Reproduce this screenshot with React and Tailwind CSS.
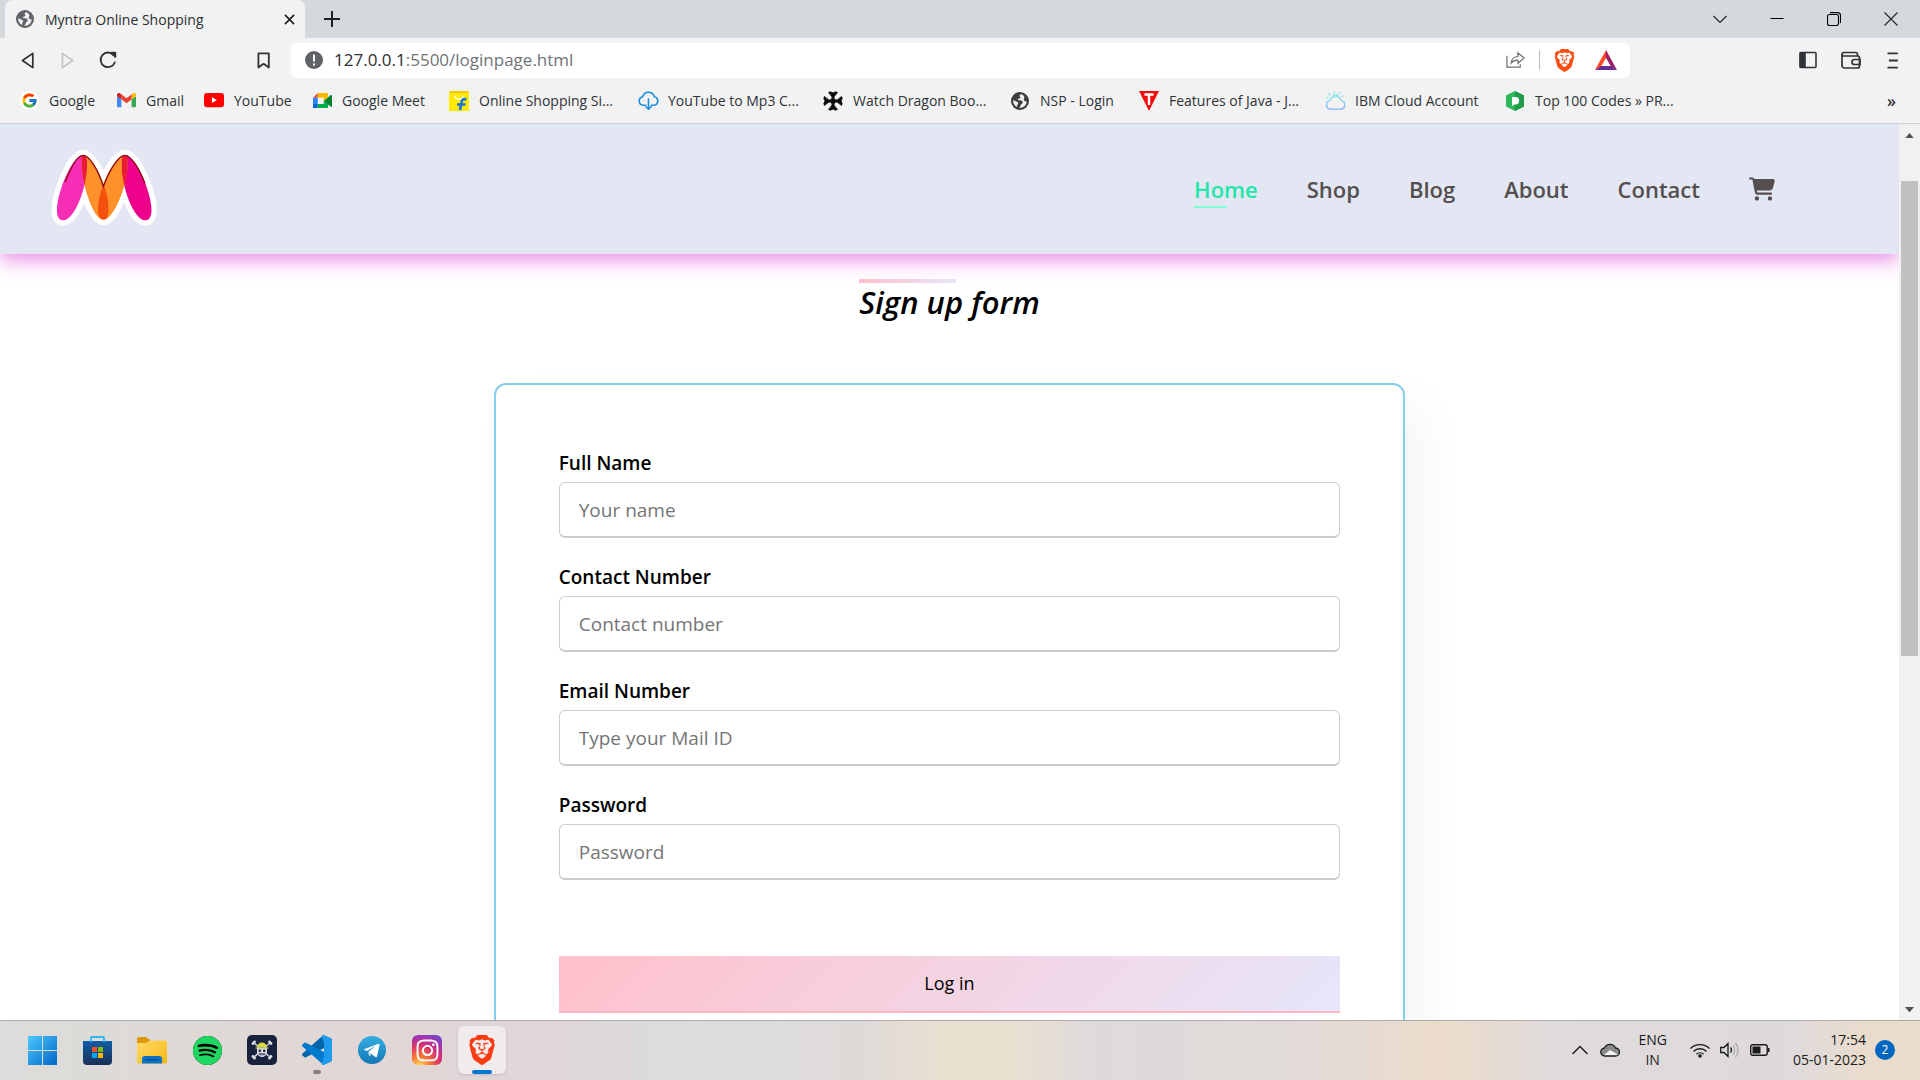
import React from "react";
import { FcGoogle } from "react-icons/fc";
import { FaCartShopping, FaInstagram } from "react-icons/fa6";
import { SiBrave, SiSpotify } from "react-icons/si";

function Globe({ color }) {
  return (
    <svg viewBox="0 0 18 18" className="w-[18px] shrink-0">
      <circle cx="9" cy="9" r="9" fill={color} />
      <path d="M10 2.200c-1.600.6-1.800 1.800-.8 2.600 1 .8-.4 1.700-1.700 2-1.300.3-.8 1.500.6 1.500 2.200 0 3.600.4 3.600 2 0 1.500-1.500 1.600-1.900 2.800-.3 1-.6 1.900-1.600 2.600 4 .3 7.300-2.500 7.500-6.300-1.600.2-2.600-.3-3-1.300-.4-1.200 1-1.900.6-3.200C12.900 3.700 11.500 2.400 10 2.200z" fill="#f2f2f2" />
      <path d="M2.200 8.200c1.600.4 2.600 1.200 3.700 1.500 1.400.4 1.600 1.600.8 2.500-.7.800-.2 1.700-.6 2.800C3.500 13.800 1.900 11 2.200 8.200z" fill="#f2f2f2" />
    </svg>
  );
}

function MyntraLogo() {
  const l1 = "M250 103 C215 105 171 220 171 268 C171 290 178 300 190 300 C225 298 262 200 262 130 C262 112 257 103 250 103Z";
  const l2 = "M250 104 C280 104 327 205 327 265 C327 285 322 298 311 298 C280 298 246 190 246 130 C246 114 246 104 250 104Z";
  const r2 = "M376 104 C344 104 295 205 295 265 C295 285 300 298 311 298 C344 298 384 190 384 130 C384 114 382 104 376 104Z";
  const r1 = "M376 103 C411 105 456 220 456 268 C456 290 449 300 437 300 C402 298 366 200 366 130 C366 112 369 103 376 103Z";
  return (
    <svg viewBox="154 85 318 232" className="h-[77px] w-[106px]" aria-label="Myntra">
      <defs>
        <clipPath id="cl"><path d={l1} /></clipPath>
        <clipPath id="cm"><path d={l2} /></clipPath>
        <clipPath id="cr"><path d={r1} /></clipPath>
      </defs>
      <g fill="#fff" stroke="#fff" strokeWidth="32" strokeLinejoin="round">
        <path d={l1} /><path d={l2} /><path d={r2} /><path d={r1} />
      </g>
      <path d={l1} fill="#f52eb5" />
      <path d={r1} fill="#ec008c" />
      <path d={l2} fill="#ff912b" />
      <path d={r2} fill="#ff912b" />
      <path d={l2} fill="#e91c38" clipPath="url(#cl)" />
      <path d={r2} fill="#e91c38" clipPath="url(#cr)" />
      <path d={r2} fill="#f4510f" clipPath="url(#cm)" />
      <path d="M196 185 C215 135 235 104 250 104 C268 104 295 145 311 198 C330 145 358 104 376 104 C394 104 420 145 436 188" fill="none" stroke="#8c0a10" strokeWidth="4" />
    </svg>
  );
}

function Gmail() {
  return (
    <svg viewBox="0 0 24 18" className="w-[19px]">
      <path d="M0 2v14.4A1.6 1.6 0 0 0 1.600 18H5.500V8L0 4z" fill="#4285f4" />
      <path d="M24 2v14.400A1.600 1.600 0 0 1 22.400 18H18.500V8L24 4z" fill="#34a853" />
      <path d="M18.500 2v6L24 4V2.400C24 .4 21.700-.7 20 .6z" fill="#fbbc04" />
      <path d="M5.500 8V1.700L12 6.600l6.500-4.900V8L12 13z" fill="#ea4335" />
      <path d="M0 2.400V4l5.500 4V1.700L4 .6C2.300-.7 0 .4 0 2.400z" fill="#c5221f" />
    </svg>
  );
}

function YouTube() {
  return (
    <svg viewBox="0 0 24 17" className="w-5">
      <rect width="24" height="17" rx="3.500" fill="#f00" />
      <path d="M9.500 5v7l6-3.500z" fill="#fff" />
    </svg>
  );
}

function Meet() {
  return (
    <svg viewBox="0 0 24 20" className="w-[19px]">
      <path d="M6 0L0 6h6z" fill="#ea4335" />
      <path d="M0 6h6v8H0z" fill="#2684fc" />
      <path d="M0 14v4.500A1.500 1.500 0 0 0 1.500 20H6v-6z" fill="#0066da" />
      <path d="M6 0v6h7.500v4L19 5.500v-4A1.500 1.500 0 0 0 17.500 0z" fill="#ffba00" />
      <path d="M13.500 10v4H6v6h11.500a1.500 1.500 0 0 0 1.500-1.500v-4z" fill="#00ac47" />
      <path d="M13.500 10L22.500 2.600c.6-.5 1.500-.1 1.500.7v13.400c0 .8-.9 1.200-1.500.7z" fill="#00832d" />
    </svg>
  );
}

function Flipkart() {
  return (
    <svg viewBox="0 0 20 20" className="w-5">
      <path d="M1 0h18l1 3v17H0V3z" fill="#ffea00" />
      <path d="M1 0h18l.7 2H.3z" fill="#f7c600" />
      <path d="M6 4.500c0 5 8 5 8 0" fill="none" stroke="#fff" strokeWidth="1.300" />
      <path d="M17.500 8.500c-3.500-1-4.500 0-5 3L11 19M8 13.500h8.500" fill="none" stroke="#1672d8" strokeWidth="2.600" />
    </svg>
  );
}

function CloudDownload() {
  return (
    <svg viewBox="0 0 22 20" className="w-[21px]" fill="none" stroke="#1a8fe0" strokeWidth="1.700" strokeLinecap="round" strokeLinejoin="round">
      <path d="M8 15H5.500a4.500 4.500 0 0 1-.6-8.900 6.300 6.300 0 0 1 12.200 0A4.500 4.500 0 0 1 16.500 15H14" />
      <path d="M11 8.500V19M8.300 16.500L11 19l2.700-2.500" />
    </svg>
  );
}

function Cross() {
  const arm = "M10 10.500Q9.500 5 5.500 1.500L7.500 .8 10 2l2.500-1.200 2 .7Q10.500 5 10 10.500z";
  return (
    <svg viewBox="0 0 20 20" className="w-5" fill="#0a0a0a" stroke="#0a0a0a" strokeWidth=".8">
      <path d={arm} />
      <path d={arm} transform="rotate(90 10 10)" />
      <path d={arm} transform="rotate(180 10 10)" />
      <path d={arm} transform="rotate(270 10 10)" />
      <circle cx="10" cy="10" r="2.600" />
    </svg>
  );
}

function Techno() {
  return (
    <svg viewBox="0 0 20 20" className="w-5">
      <path d="M0 0h20l-10 20z" fill="#f20d0d" />
      <path d="M5.500 3.500h9M10 3.500V14" stroke="#fff" strokeWidth="2.400" />
    </svg>
  );
}

function IbmCloud() {
  return (
    <svg viewBox="0 0 22 20" className="w-[21px]" fill="none" strokeWidth="1.500" strokeLinecap="round">
      <defs>
        <linearGradient id="ibm" x1="0" y1="0" x2="0" y2="1">
          <stop offset="0" stopColor="#8fe6ec" />
          <stop offset="1" stopColor="#7fb0fb" />
        </linearGradient>
      </defs>
      <path d="M6 19a4.500 4.500 0 0 1-.8-8.900 6.200 6.200 0 0 1 11.800 0A4.500 4.500 0 0 1 16.500 19z" stroke="url(#ibm)" />
      <path d="M8 5.500a4.500 4.500 0 0 1 6-.3M4 3l1 1M9.500 1v1.200M15.500 1.500l-.8 1M2 7h1.200M18.500 5l-1 .6" stroke="#8fe6ec" />
    </svg>
  );
}

function PrepInsta() {
  return (
    <svg viewBox="0 0 18 20" className="w-[18px]">
      <path d="M9 0l9 4.500v11L9 20l-9-4.500v-11z" fill="#2eb85c" />
      <path d="M9 0l9 4.500v11L9 20z" fill="#219a49" />
      <path d="M6 6h3.500a3.500 3.500 0 0 1 0 7.400H8.200L6 15z" fill="#fff" />
    </svg>
  );
}

const bookmarks = [
  { label: "Google", icon: <span className="rounded-full bg-white p-px"><FcGoogle size={17} /></span>, w: "w-[97px]" },
  { label: "Gmail", icon: <Gmail />, w: "w-[88px]" },
  { label: "YouTube", icon: <YouTube />, w: "w-[108px]" },
  { label: "Google Meet", icon: <Meet />, w: "w-[137px]" },
  { label: "Online Shopping Si...", icon: <Flipkart />, w: "w-[189px]" },
  { label: "YouTube to Mp3 C...", icon: <CloudDownload />, w: "w-[185px]" },
  { label: "Watch Dragon Boo...", icon: <Cross />, w: "w-[187px]" },
  { label: "NSP - Login", icon: <Globe color="#3c4043" />, w: "w-[129px]" },
  { label: "Features of Java - J...", icon: <Techno />, w: "w-[186px]" },
  { label: "IBM Cloud Account", icon: <IbmCloud />, w: "w-[180px]" },
  { label: "Top 100 Codes » PR...", icon: <PrepInsta />, w: "w-[180px]" },
];

function IconButton({ label, className = "", children }) {
  return (
    <button type="button" aria-label={label} className={"flex shrink-0 items-center justify-center " + className}>
      {children}
    </button>
  );
}

function TabStrip() {
  return (
    <div className="flex h-[38px] items-stretch bg-[#d5d9dc] pl-[5px]">
      <div className="flex w-[300px] items-center rounded-t-lg bg-[#f2f2f2] pr-[6px] pl-[11px]">
        <Globe color="#5f6368" />
        <span className="ml-[11px] flex-1 text-[14px] text-[#2b2d30]">Myntra Online Shopping</span>
        <IconButton label="Close tab" className="size-5">
          <svg viewBox="0 0 12 12" className="w-[11px]" stroke="#202124" strokeWidth="1.800"><path d="M1 1l10 10M11 1L1 11" /></svg>
        </IconButton>
      </div>
      <IconButton label="New tab" className="ml-[15px] w-6">
        <svg viewBox="0 0 16 16" className="w-4" stroke="#202124" strokeWidth="2"><path d="M8 0v16M0 8h16" /></svg>
      </IconButton>
      <div className="ml-auto flex pr-px text-black">
        <IconButton label="Search tabs" className="w-[57px]">
          <svg viewBox="0 0 14 14" className="w-[14px]" fill="none" stroke="#222" strokeWidth="1.100"><path d="M.5 4l6.500 6.500L13.500 4" /></svg>
        </IconButton>
        <IconButton label="Minimize" className="w-[57px]">
          <svg viewBox="0 0 14 14" className="w-[14px]" stroke="#000" strokeWidth="1"><path d="M.5 6.500h13" /></svg>
        </IconButton>
        <IconButton label="Restore" className="w-[57px]">
          <svg viewBox="0 0 14 14" className="w-[14px]" fill="none" stroke="#000" strokeWidth="1.100"><rect x=".5" y="2.500" width="11" height="11" rx="2" /><path d="M3 .6h7.500a3 3 0 0 1 3 3V11" /></svg>
        </IconButton>
        <IconButton label="Close" className="w-[57px]">
          <svg viewBox="0 0 14 14" className="w-[14px]" stroke="#222" strokeWidth="1.100"><path d="M.5 .5l13 13M13.500 .5l-13 13" /></svg>
        </IconButton>
      </div>
    </div>
  );
}

function Toolbar() {
  return (
    <div className="flex h-[44px] items-center bg-[#f2f2f2]">
      <IconButton label="Back" className="ml-2 w-10">
        <svg viewBox="0 0 14 18" className="h-[17px]" fill="none" stroke="#2f3337" strokeWidth="1.800" strokeLinejoin="round"><path d="M12.500 1.500v15L1.500 9z" /></svg>
      </IconButton>
      <IconButton label="Forward" className="w-10">
        <svg viewBox="0 0 14 18" className="h-[17px]" fill="none" stroke="#c4c4c4" strokeWidth="1.800" strokeLinejoin="round"><path d="M1.500 1.500v15l11-7.500z" /></svg>
      </IconButton>
      <IconButton label="Reload" className="w-10">
        <svg viewBox="0 0 18 18" className="w-[18px]" fill="none" stroke="#2f3337" strokeWidth="1.900" strokeLinecap="round"><path d="M15.800 11.500A7.300 7.300 0 1 1 14.500 4" /><path d="M12.300 1.600h4v4.300z" fill="#2f3337" strokeLinejoin="round" /></svg>
      </IconButton>
      <IconButton label="Bookmark this tab" className="ml-[116px] w-10">
        <svg viewBox="0 0 14 18" className="h-[17px]" fill="none" stroke="#2f3337" strokeWidth="1.900" strokeLinejoin="round"><path d="M1.500 1.500h11v15L7 12.500l-5.500 4z" /></svg>
      </IconButton>
      <div className="ml-[7px] flex h-[35px] min-w-0 flex-1 items-center rounded-md bg-white pr-2 pl-[14px]">
        <svg viewBox="0 0 18 18" className="w-[18px] shrink-0"><circle cx="9" cy="9" r="9" fill="#5f6368" /><path d="M9 3.500v7M9 12.500v2" stroke="#fff" strokeWidth="2" /></svg>
        <div className="ml-[11px] flex-1 text-[17px] text-[#6f7377]"><span className="text-[#2b2d30]">127.0.0.1</span>:5500/loginpage.html</div>
        <IconButton label="Share" className="w-8">
          <svg viewBox="0 0 20 18" className="w-[19px]" fill="none" stroke="#6b6f73" strokeWidth="1.300"><path d="M1 5v12h14v-3M5.500 12.500c.5-4.500 3-6.500 7-6.700V2L19 7.500 12.500 13V9.500C9.500 9.400 7.200 10.400 5.500 12.500z" /></svg>
        </IconButton>
        <span className="mx-2 h-5 w-px bg-[#bbb]" />
        <IconButton label="Brave Shields" className="w-8"><SiBrave size={23} color="#fb4c14" /></IconButton>
        <IconButton label="Brave Rewards" className="ml-[10px] w-8">
          <svg viewBox="0 0 22 20" className="w-[22px]">
            <path d="M11 0L0 20l6-3.500L11 8z" fill="#ff4724" />
            <path d="M11 0l11 20-6-3.500L11 8z" fill="#9e1f63" />
            <path d="M0 20h22l-6-4H6z" fill="#662d91" />
          </svg>
        </IconButton>
      </div>
      <div className="ml-[156px] flex pr-[7px]">
        <IconButton label="Sidebar" className="w-[43px]">
          <svg viewBox="0 0 18 18" className="w-[18px]" fill="none" stroke="#2f3337" strokeWidth="1.600"><rect x="1" y="1.500" width="16" height="15" rx="1" /><path d="M1.500 2h4.500v14H1.500z" fill="#2f3337" /></svg>
        </IconButton>
        <IconButton label="Wallet" className="w-[43px]">
          <svg viewBox="0 0 20 18" className="w-5" fill="none" stroke="#2f3337" strokeWidth="1.700"><path d="M1 3.500v11A2.500 2.500 0 0 0 3.500 17h13a2 2 0 0 0 2-2V7a2 2 0 0 0-2-2H2.500A1.500 1.500 0 0 1 1 3.500 2 2 0 0 1 3 1.500h11.500a2 2 0 0 1 2 2V5" /><path d="M19 8.500h-5.500a2.500 2.500 0 0 0 0 5H19z" /></svg>
        </IconButton>
        <IconButton label="Menu" className="w-[41px]">
          <svg viewBox="0 0 12 18" className="h-[17px]" stroke="#2f3337" strokeWidth="1.900"><path d="M.5 1.500h11M2 9h9.500M.5 16.500h11" /></svg>
        </IconButton>
      </div>
    </div>
  );
}

function Bookmarks() {
  return (
    <nav aria-label="Bookmarks" className="flex h-[42px] items-center border-b border-[#d0d2d6] bg-[#f2f2f2] pb-1 pl-[18px]">
      {bookmarks.map((b) => (
        <a key={b.label} href="#bookmark" className={"flex shrink-0 items-center gap-[9px] whitespace-nowrap text-[14px] text-[#2f3237] " + b.w}>
          <span className="flex w-[22px] shrink-0 justify-center">{b.icon}</span>
          {b.label}
        </a>
      ))}
      <button type="button" aria-label="More bookmarks" className="mr-6 ml-auto text-[16px] font-semibold text-[#2f3237]">»</button>
    </nav>
  );
}

const navItems = ["Home", "Shop", "Blog", "About", "Contact"];

function SiteHeader() {
  return (
    <header className="relative z-10 flex h-[130px] shrink-0 items-center justify-between bg-[#e3e6f3] pr-[124px] pl-[51px] shadow-[0_5px_20px_#e883e5]">
      <a href="#home" className="pb-1"><MyntraLogo /></a>
      <nav className="flex items-center gap-[49px] text-[22px] font-semibold text-[#544f4e]">
        {navItems.map((item, i) => (
          <a key={item} href={"#" + item.toLowerCase()} className={i === 0 ? "relative text-[#22e6aa]" : "relative"}>
            {item}
            {i === 0 && <span className="absolute -bottom-[2px] left-0 h-[2px] w-[33px] bg-[#7fffd4]" />}
          </a>
        ))}
        <a href="#cart" aria-label="Cart"><FaCartShopping size={26} /></a>
      </nav>
    </header>
  );
}

const fields = [
  { id: "name", label: "Full Name", placeholder: "Your name", type: "text" },
  { id: "contact", label: "Contact Number", placeholder: "Contact number", type: "text" },
  { id: "email", label: "Email Number", placeholder: "Type your Mail ID", type: "email" },
  { id: "password", label: "Password", placeholder: "Password", type: "password" },
];

function SignUp() {
  return (
    <main className="flex flex-col items-center pt-[25px]">
      <div className="flex flex-col">
        <span className="h-1 w-[97px] bg-linear-to-r from-[#ffc0cb] to-[#e6e6fa]" />
        <h2 className="text-[31px] leading-[38px] font-semibold text-black italic">Sign up form</h2>
      </div>
      <form className="mt-[62px] w-[48%] rounded-xl border-2 border-[#87ceeb] px-[63px] pt-[66px] pb-16 shadow-[20px_20px_50px_rgba(0,0,0,0.04)]">
        {fields.map((f) => (
          <div key={f.id} className="mb-[27px] flex flex-col">
            <label htmlFor={f.id} className="h-[31px] text-[19px] leading-6 font-semibold text-black">{f.label}</label>
            <input
              id={f.id}
              type={f.type}
              placeholder={f.placeholder}
              className="h-14 w-full rounded-md border border-b-2 border-[#ccc] bg-white px-[19px] text-[19px] placeholder:text-[#757575]"
            />
          </div>
        ))}
        <button type="button" className="mt-[49px] h-[57px] w-full border-b-2 border-[#ffb6c1] bg-linear-135 from-[#ffc0cb] to-[#e6e6fa] text-[18px] text-black">
          Log in
        </button>
      </form>
    </main>
  );
}

function ScrollBar() {
  return (
    <div className="flex w-[21px] shrink-0 flex-col items-center bg-[#f1f1f1]">
      <svg viewBox="0 0 10 6" className="mt-[9px] w-[9px]"><path d="M0 6h10L5 0z" fill="#505050" /></svg>
      <div className="mt-[43px] h-[53%] w-[17px] bg-[#c1c1c1]" />
      <svg viewBox="0 0 10 6" className="mt-auto mb-2 w-[9px]"><path d="M0 0h10L5 6z" fill="#505050" /></svg>
    </div>
  );
}

function WindowsIcon() {
  return (
    <svg viewBox="0 0 29 29" className="w-[29px]">
      <defs>
        <linearGradient id="win" x1="0" y1="0" x2="1" y2="1"><stop offset="0" stopColor="#4cc8fb" /><stop offset="1" stopColor="#0067c8" /></linearGradient>
      </defs>
      <path d="M0 0h14v14H0zM15 0h14v14H15zM0 15h14v14H0zM15 15h14v14H15z" fill="url(#win)" />
    </svg>
  );
}

function StoreIcon() {
  return (
    <svg viewBox="0 0 29 29" className="w-[29px]">
      <defs>
        <linearGradient id="store" x1="0" y1="0" x2="0" y2="1"><stop offset="0" stopColor="#0f5ea8" /><stop offset="1" stopColor="#1b2f57" /></linearGradient>
      </defs>
      <path d="M0 5h29v20a4 4 0 0 1-4 4H4a4 4 0 0 1-4-4z" fill="url(#store)" />
      <path d="M8 6V2a1 1 0 0 1 1-1h11a1 1 0 0 1 1 1v4" fill="none" stroke="#2cb7f5" strokeWidth="1.800" />
      <path d="M9 11h5v5H9z" fill="#f25022" /><path d="M15 11h5v5h-5z" fill="#7fba00" />
      <path d="M9 17h5v5H9z" fill="#00a4ef" /><path d="M15 17h5v5h-5z" fill="#ffb900" />
    </svg>
  );
}

function FolderIcon() {
  return (
    <svg viewBox="0 0 30 27" className="w-[30px]">
      <defs>
        <linearGradient id="fold" x1="0" y1="0" x2="1" y2="1"><stop offset="0" stopColor="#ffda6a" /><stop offset="1" stopColor="#fbb814" /></linearGradient>
      </defs>
      <path d="M0 1.500A1.500 1.500 0 0 1 1.500 0H9l4 3v4H0z" fill="#dd9a06" />
      <path d="M0 6h9l4-2.500h15.500A1.500 1.500 0 0 1 30 5v20a1.500 1.500 0 0 1-1.500 1.500h-27A1.500 1.500 0 0 1 0 25z" fill="url(#fold)" />
      <path d="M5 26.500V22a3 3 0 0 1 3-3h14a3 3 0 0 1 3 3v4.500z" fill="#0c6fc4" />
      <path d="M9 22.800h12" stroke="#0a4c8c" strokeWidth="1.200" strokeLinecap="round" />
    </svg>
  );
}

function PirateIcon() {
  return (
    <svg viewBox="0 0 30 30" className="w-[30px]">
      <rect width="30" height="30" rx="5" fill="#18223c" />
      <path d="M6 7l18 16M24 7L6 23" stroke="#c3c8cf" strokeWidth="1.600" />
      <g fill="#d9dde2">
        <circle cx="6" cy="8.500" r="1.400" /><circle cx="7.500" cy="6.800" r="1.400" /><circle cx="24" cy="8.500" r="1.400" /><circle cx="22.500" cy="6.800" r="1.400" />
        <circle cx="6" cy="21.500" r="1.400" /><circle cx="7.500" cy="23.200" r="1.400" /><circle cx="24" cy="21.500" r="1.400" /><circle cx="22.500" cy="23.200" r="1.400" />
        <path d="M10 13h10v4c0 2.500-2 5-5 5s-5-2.500-5-5z" />
      </g>
      <path d="M10 12.500a5 5 0 0 1 10 0z" fill="#d8d83e" />
      <path d="M8.500 13h13" stroke="#c9cf8a" strokeWidth="1.200" />
      <circle cx="12.800" cy="15.700" r="1.300" fill="#18223c" /><circle cx="17.200" cy="15.700" r="1.300" fill="#18223c" />
      <path d="M11.500 19h7M13 18v2.500M15 18v2.500M17 18v2.500" stroke="#18223c" strokeWidth=".7" />
    </svg>
  );
}

function VsCodeIcon() {
  return (
    <svg viewBox="0 0 30 30" className="w-[30px]">
      <path d="M21.500 0L29 3.500a1.700 1.700 0 0 1 1 1.600V9L4 22.300a1.200 1.200 0 0 1-1.500-.1L.5 20.400a1.200 1.200 0 0 1 0-1.800z" fill="#0065a9" />
      <path d="M21.500 30L29 26.500a1.700 1.700 0 0 0 1-1.600V21L4 7.700a1.200 1.200 0 0 0-1.500.1L.5 9.600a1.200 1.200 0 0 0 0 1.800z" fill="#007acc" />
      <path d="M21.500 30c-.8.200-1.500-.2-1.500-1.200L22 21V9L20 1.200C20 .2 20.700-.2 21.500 0L29 3.500a1.700 1.700 0 0 1 1 1.600v19.800a1.700 1.700 0 0 1-1 1.600z" fill="#1f9cf0" />
    </svg>
  );
}

function TelegramIcon() {
  return (
    <svg viewBox="0 0 28 28" className="w-7">
      <defs>
        <linearGradient id="tg" x1="0" y1="0" x2="0" y2="1"><stop offset="0" stopColor="#37aee2" /><stop offset="1" stopColor="#1277b5" /></linearGradient>
      </defs>
      <circle cx="14" cy="14" r="14" fill="url(#tg)" />
      <path d="M5.500 13.500L20.500 7.700c.8-.2 1.200.2 1 1.200L19 20.500c-.2.800-.8 1-1.500.6L10.300 16l7.500-6.200-9 5.200z" fill="#fff" />
      <path d="M10.300 16l.8 4.500 2.200-2.300z" fill="#cfe3ef" />
    </svg>
  );
}

const apps = [
  { name: "Start", icon: <WindowsIcon /> },
  { name: "Microsoft Store", icon: <StoreIcon /> },
  { name: "File Explorer", icon: <FolderIcon /> },
  { name: "Spotify", icon: <span className="rounded-full bg-black"><SiSpotify size={29} color="#1ed760" /></span> },
  { name: "Pirate", icon: <PirateIcon /> },
  { name: "Visual Studio Code", icon: <VsCodeIcon />, running: true },
  { name: "Telegram", icon: <TelegramIcon /> },
  {
    name: "Instagram",
    icon: (
      <span className="flex size-[30px] items-center justify-center rounded-[6px] bg-[radial-gradient(circle_at_25%_105%,#fdd25c_5%,#f77f32_25%,#dc2f6f_55%,#a334ae_75%,#5b4fd0_100%)]">
        <FaInstagram size={25} color="#fff" />
      </span>
    ),
  },
  { name: "Brave", icon: <SiBrave size={30} color="#fb3b12" />, active: true },
];

function Taskbar() {
  return (
    <footer className="flex h-[60px] shrink-0 items-center justify-between border-t border-[#aaa8a8] bg-[linear-gradient(90deg,#dcdcda_0%,#dedad6_10%,#e2d6d6_20%,#e0d6d8_28%,#dbdcde_36%,#dfdad8_45%,#eae0d2_49%,#eae0d2_53%,#dedadb_57%,#e1dad7_68%,#ecdccb_75%,#dfdbdb_81%,#dedadc_93%,#e9dccd_97%)] pr-[25px] pb-px pl-[18px]">
      <div className="flex gap-[7px]">
        {apps.map((a) => (
          <button
            key={a.name}
            type="button"
            aria-label={a.name}
            className={"relative flex size-12 items-center justify-center rounded-md " + (a.active ? "bg-[#f1ebeb] shadow-sm" : "")}
          >
            {a.icon}
            {a.running && <span className="absolute bottom-0 h-1 w-2 rounded-full bg-[#858080]" />}
            {a.active && <span className="absolute bottom-0 h-1 w-5 rounded-full bg-[#0078d4]" />}
          </button>
        ))}
      </div>
      <div className="flex items-center text-[14px] leading-5 text-[#1b1b1b]">
        <svg viewBox="0 0 16 10" className="w-4" fill="none" stroke="#1b1b1b" strokeWidth="1.400"><path d="M.5 9L8 1.500 15.500 9" /></svg>
        <svg viewBox="0 0 20 14" className="ml-3 w-5">
          <path d="M5 13a4 4 0 0 1-.5-8 6 6 0 0 1 11 0A4 4 0 0 1 15.500 13z" fill="#8b8b8b" />
          <path d="M3.500 12.500L10 7l8 4.500-2 1.500H5z" fill="#f2f2f2" />
          <path d="M5 13a4 4 0 0 1-.5-8 6 6 0 0 1 11 0A4 4 0 0 1 15.500 13z" fill="none" stroke="#1b1b1b" strokeWidth="1.300" />
        </svg>
        <div className="ml-[18px] text-center">ENG<br />IN</div>
        <svg viewBox="0 0 20 15" className="ml-[23px] w-5" fill="none" stroke="#1b1b1b" strokeWidth="1.400">
          <path d="M.5 5.500a13.500 13.500 0 0 1 19 0M3.500 8.500a9.200 9.200 0 0 1 13 0M6.500 11.300a5 5 0 0 1 7 0" /><circle cx="10" cy="13" r="1.800" fill="#1b1b1b" stroke="none" />
        </svg>
        <svg viewBox="0 0 20 16" className="ml-[10px] w-5" fill="none" stroke="#1b1b1b" strokeWidth="1.300">
          <path d="M.7 5.500v5H4L8 14.500v-13L4 5.500zM10.500 5.500a4 4 0 0 1 0 5" /><path d="M13 3.500a7 7 0 0 1 0 9M15.500 1a11 11 0 0 1 0 14" stroke="#aaa" />
        </svg>
        <svg viewBox="0 0 20 12" className="ml-[10px] w-5"><rect x=".7" y=".7" width="16.500" height="10.600" rx="2" fill="none" stroke="#1b1b1b" strokeWidth="1.400" /><path d="M2.500 2.500h8v7h-8z" fill="#1b1b1b" /><path d="M18 4h1.500v4H18z" fill="#1b1b1b" /></svg>
        <div className="ml-[23px] text-right">17:54<br />05-01-2023</div>
        <span className="ml-[9px] flex size-5 items-center justify-center rounded-full bg-[#0067c0] text-[12px] text-white">2</span>
      </div>
    </footer>
  );
}

export default function App() {
  return (
    <div className="flex h-screen flex-col overflow-hidden bg-white font-['Open_Sans','Noto_Sans',sans-serif]">
      <TabStrip />
      <Toolbar />
      <Bookmarks />
      <div className="flex min-h-0 flex-1">
        <div className="flex min-w-0 flex-1 flex-col overflow-hidden">
          <SiteHeader />
          <SignUp />
        </div>
        <ScrollBar />
      </div>
      <Taskbar />
    </div>
  );
}
